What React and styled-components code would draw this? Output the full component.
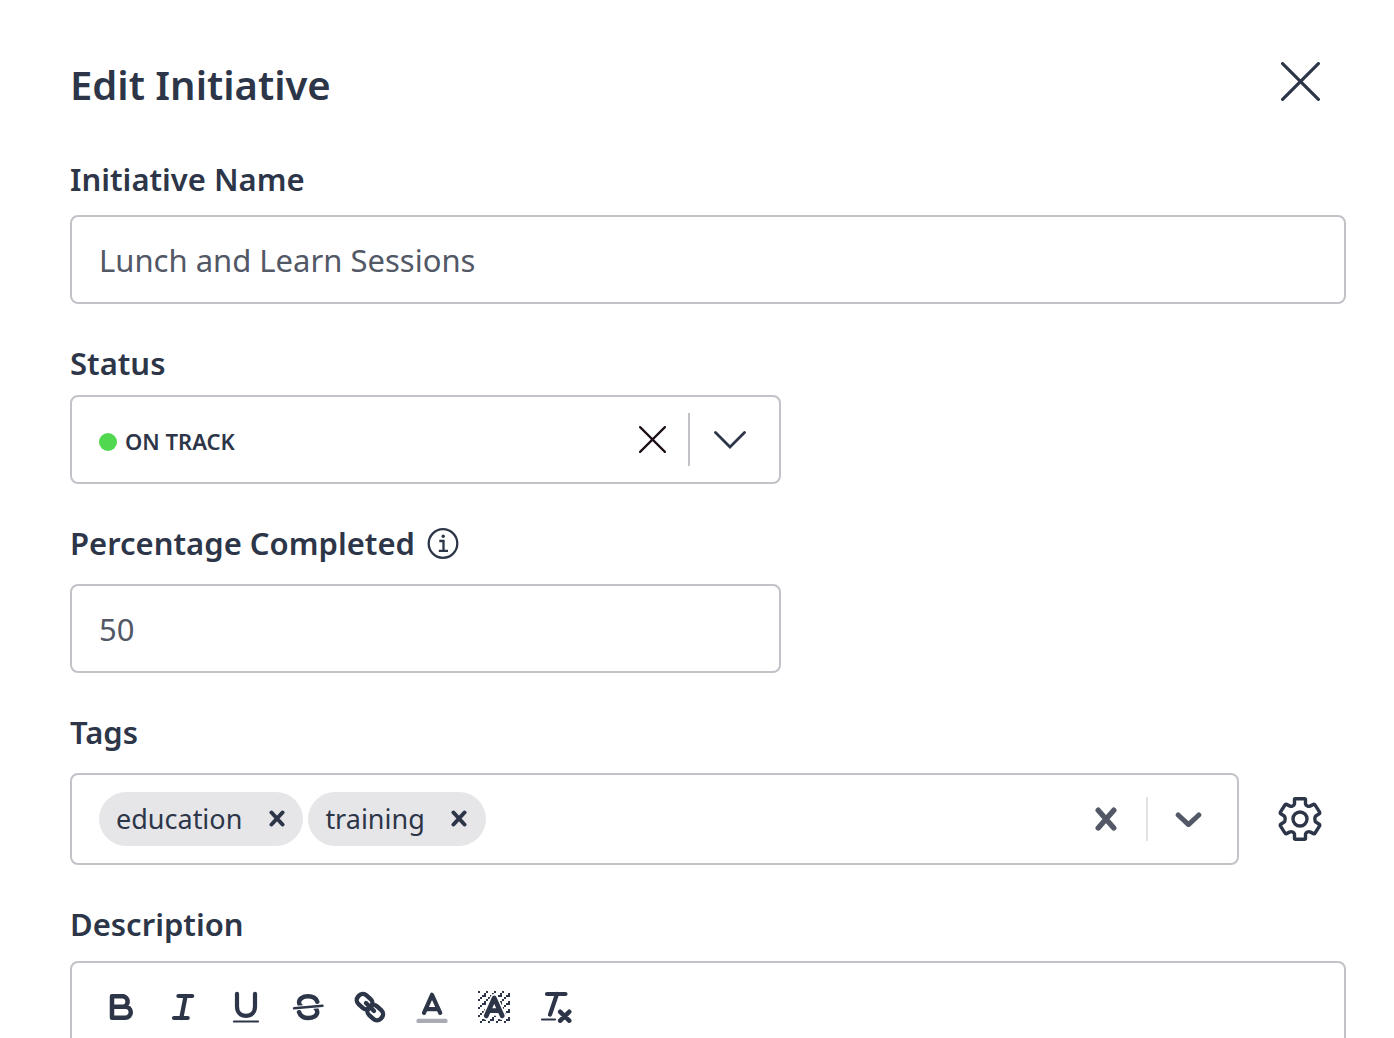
import React, { useState } from "react";
import styled, { createGlobalStyle } from "styled-components";

const ink = "#2d3648";
const soft = "#525866";
const line = "#c2c2c8";

const GlobalStyle = createGlobalStyle`
  *, *::before, *::after { box-sizing: border-box; }
  body {
    margin: 0;
    background: #fff;
    color: ${ink};
    font-family: "Noto Sans", "Open Sans", sans-serif;
  }
  button, input, select, textarea { font: inherit; color: inherit; margin: 0; }
`;

const Dialog = styled.main`
  height: 100vh;
  overflow: hidden;
  padding: 57px 48px 0 70px;
`;

const Header = styled.header`
  display: flex;
  justify-content: space-between;
  align-items: center;
  height: 56px;
  margin-bottom: 44px;
`;

const Title = styled.h1`
  margin: 0;
  font-size: 40px;
  line-height: 56px;
  font-weight: 600;
`;

const IconButton = styled.button`
  display: flex;
  align-items: center;
  justify-content: center;
  flex: none;
  width: ${(p) => p.$width}px;
  height: ${(p) => p.$height || 44}px;
  padding: 0;
  border: 0;
  background: none;
  color: ${(p) => p.$color || ink};
  cursor: pointer;
`;

const CloseButton = styled(IconButton)`
  align-self: flex-start;
  margin-right: 24px;
`;

const Form = styled.form`
  display: flex;
  flex-direction: column;
  gap: 37px;
`;

const Field = styled.div`
  display: flex;
  flex-direction: column;
  gap: ${(p) => p.$gap}px;
`;

const LabelRow = styled.div`
  display: flex;
  align-items: center;
  gap: 12px;
`;

const Label = styled.label`
  font-size: 31px;
  line-height: 44px;
  font-weight: 600;
`;

const TextInput = styled.input`
  width: 100%;
  max-width: ${(p) => (p.$short ? "711px" : "none")};
  height: 89px;
  padding: 0 27px;
  border: 2px solid ${line};
  border-radius: 8px;
  background: #fff;
  color: ${soft};
  font-size: 31px;
  line-height: 44px;
`;

const SelectBox = styled.div`
  display: flex;
  align-items: center;
  max-width: 711px;
  height: 89px;
  padding: 0 8px 0 27px;
  border: 2px solid ${line};
  border-radius: 8px;
`;

const Dot = styled.span`
  flex: none;
  width: 18px;
  height: 18px;
  margin: 4px 8px 0 0;
  border-radius: 50%;
  background: #50d850;
`;

const StatusSelect = styled.select`
  flex: 1;
  min-width: 0;
  appearance: none;
  border: 0;
  padding: 2px 0 0;
  background: none;
  font-size: 22px;
  line-height: 32px;
  font-weight: 600;
`;

const Divider = styled.span`
  width: 2px;
  height: ${(p) => p.$height}px;
  background: ${(p) => p.$color};
`;

const TagsRow = styled.div`
  display: flex;
  align-items: center;
`;

const TagsBox = styled.div`
  display: flex;
  align-items: center;
  flex: 1;
  min-width: 0;
  height: 92px;
  padding: 0 8px 0 27px;
  border: 2px solid ${line};
  border-radius: 8px;
`;

const TagList = styled.ul`
  display: flex;
  gap: 5px;
  margin: 0;
  padding: 0;
  list-style: none;
`;

const Tag = styled.li`
  display: flex;
  align-items: center;
  gap: 8px;
  height: 54px;
  padding-left: 17px;
  border-radius: 27px;
  background: #e6e6e9;
  font-size: 27px;
  line-height: 38px;
`;

const TagInput = styled.input`
  flex: 1;
  min-width: 0;
  border: 0;
  outline: 0;
  background: none;
  font-size: 27px;
`;

const SettingsButton = styled(IconButton)`
  margin: 0 24px 0 39px;
`;

const Editor = styled.div`
  border: 2px solid ${line};
  border-radius: 8px;
`;

const Toolbar = styled.div`
  display: flex;
  gap: 18px;
  padding: 22px 28px;
`;

const EditorArea = styled.textarea`
  display: block;
  width: 100%;
  height: 240px;
  padding: 0 27px;
  border: 0;
  resize: none;
  background: none;
  font-size: 31px;
`;

function Stroke({ w, h = w, sw = 2, children, ...rest }) {
  return (
    <svg
      width={w}
      height={h}
      viewBox={`0 0 ${w} ${h}`}
      fill="none"
      stroke="currentColor"
      strokeWidth={sw}
      strokeLinecap="round"
      strokeLinejoin="round"
      aria-hidden="true"
      {...rest}
    >
      {children}
    </svg>
  );
}

const Cross = ({ size, sw }) => (
  <Stroke w={size} sw={sw}>
    <path d={`M${sw / 2} ${sw / 2}L${size - sw / 2} ${size - sw / 2}M${size - sw / 2} ${sw / 2}L${sw / 2} ${size - sw / 2}`} />
  </Stroke>
);

const InfoIcon = () => (
  <Stroke w={32} sw={2.3}>
    <circle cx="16" cy="16.5" r="14.3" />
    <path d="M12.3 14H16.5V23.5M11.8 23.9H21" strokeLinecap="butt" strokeLinejoin="miter" />
    <circle cx="16.2" cy="9.2" r="1.7" fill="currentColor" stroke="none" />
  </Stroke>
);

const GearIcon = () => (
  <Stroke w={44} sw={3.4}>
    <circle cx="22" cy="22" r="7" />
    <path d="M16.5 2.5Q16.5 1.8 17.5 1.8H26.5Q27.5 1.8 27.5 2.8V6.8Q27.8 8.2 29.3 8.8Q30.8 9.8 32 9.1L35.5 7.4Q36.5 7 37.1 8L41.6 15.2Q42 16.2 41.2 16.8L37.8 19Q36.8 19.7 36.9 22Q36.8 24.3 37.8 25L41.2 27.2Q42 27.8 41.6 28.8L37.1 36Q36.5 37 35.5 36.6L32 34.9Q30.8 34.2 29.3 35.2Q27.8 35.8 27.5 37.2V41.2Q27.5 42.2 26.5 42.2H17.5Q16.5 42.2 16.5 41.2V37.2Q16.2 35.8 14.7 35.2Q13.2 34.2 12 34.9L8.5 36.6Q7.5 37 6.9 36L2.4 28.8Q2 27.8 2.8 27.2L6.2 25Q7.2 24.3 7.1 22Q7.2 19.7 6.2 19L2.8 16.8Q2 16.2 2.4 15.2L6.9 8Q7.5 7 8.5 7.4L12 9.1Q13.2 9.8 14.7 8.8Q16.2 8.2 16.5 6.8Z" />
  </Stroke>
);

const BoldIcon = () => (
  <Stroke w={32} sw={4.5}>
    <path d="M6 5.2H17.3A5.4 5.4 0 0 1 17.3 15.8H6ZM6 15.8H19.3A5.5 5.5 0 0 1 19.3 26.8H6Z" />
  </Stroke>
);

const ItalicIcon = () => (
  <Stroke w={32} sw={4.2}>
    <path d="M10.4 5H24.2M6 27H19.7M17.6 5L13.3 27" />
  </Stroke>
);

const UnderlineIcon = () => (
  <Stroke w={32} sw={4.2}>
    <path d="M7 2.8V15.5C7 21 10.5 24.8 16 24.8S25 21 25 15.5V2.8" />
    <path d="M4 30.5H28" strokeWidth="2.2" />
  </Stroke>
);

const StrikeIcon = () => (
  <Stroke w={32} sw={4.4}>
    <path d="M25.3 10.8C24 7 20.4 5.3 16 5.3C10.5 5.3 7 8 7 11.5C7 13 7.6 14 8.8 15M7 21C8.2 24.7 11.6 27 16 27C21.5 27 25.3 24.5 25.3 21C25.3 19.6 24.8 18.5 23.8 17.7" />
    <path d="M2 17.3L30.5 14.8" stroke="#fff" strokeWidth="4.6" />
    <path d="M2 17.3L30.5 14.8" strokeWidth="2.4" />
  </Stroke>
);

const LinkIcon = () => (
  <Stroke w={32} sw={4.4}>
    <rect x="-8.2" y="-5.9" width="16.4" height="11.8" rx="5.4" transform="translate(10.6 10.6) rotate(42)" />
    <rect x="-8.2" y="-5.9" width="16.4" height="11.8" rx="5.4" transform="translate(21.2 21.6) rotate(42)" />
    <path d="M12 12L20 20" />
  </Stroke>
);

const TextColorIcon = () => (
  <Stroke w={32} sw={4.2}>
    <path d="M8 21.8L16 3.8L24.2 21.8M10.8 18.2H21.4" />
    <path d="M2.6 30H29.4" stroke="#a9acb3" strokeWidth="4.4" />
  </Stroke>
);

const hatch = [];
for (let y = 0; y < 16; y++) {
  for (let x = 0; x < 16; x++) {
    if ((x + y) % 4 === 0 || ((x + y) % 4 === 1 && y % 4 === 2)) hatch.push(`M${x * 2} ${y * 2}h2v2h-2z`);
  }
}
const letterA = "M8.3 24.8L16.2 7L24.2 24.8M11.5 19.6H21";

const HighlightIcon = () => (
  <Stroke w={32} sw={4.8}>
    <path d={hatch.join("")} fill="currentColor" stroke="none" shapeRendering="crispEdges" />
    <path d={letterA} fill="#fff" stroke="#fff" strokeWidth="8" />
    <path d={letterA} />
  </Stroke>
);

const ClearFormatIcon = () => (
  <Stroke w={32} sw={4.2}>
    <path d="M7 3H25.5M17 3L10 23.6" />
    <path d="M2 28.5H15" strokeWidth="2.2" />
    <path d="M20.2 20.8L29.2 29.7M29.2 20.8L20.2 29.7" strokeWidth="4.6" />
  </Stroke>
);

const tools = [
  ["Bold", BoldIcon],
  ["Italic", ItalicIcon],
  ["Underline", UnderlineIcon],
  ["Strikethrough", StrikeIcon],
  ["Link", LinkIcon],
  ["Text colour", TextColorIcon],
  ["Highlight", HighlightIcon],
  ["Clear formatting", ClearFormatIcon],
];

export default function App() {
  const [name, setName] = useState("Lunch and Learn Sessions");
  const [percent, setPercent] = useState("50");
  const [status, setStatus] = useState("on");
  const [tags, setTags] = useState(["education", "training"]);

  return (
    <>
      <GlobalStyle />
      <Dialog>
        <Header>
          <Title>Edit Initiative</Title>
          <CloseButton type="button" $width={43} $height={48} aria-label="Close">
            <Cross size={39} sw={3.2} />
          </CloseButton>
        </Header>
        <Form onSubmit={(e) => e.preventDefault()}>
          <Field $gap={14}>
            <Label htmlFor="name">Initiative Name</Label>
            <TextInput id="name" value={name} onChange={(e) => setName(e.target.value)} />
          </Field>

          <Field $gap={10}>
            <Label htmlFor="status">Status</Label>
            <SelectBox>
              {status && <Dot />}
              <StatusSelect id="status" value={status} onChange={(e) => setStatus(e.target.value)}>
                <option value="" />
                <option value="on">ON TRACK</option>
              </StatusSelect>
              <IconButton type="button" $width={71} $color="#1c0d18" aria-label="Clear status" onClick={() => setStatus("")}>
                <Cross size={27} sw={2.2} />
              </IconButton>
              <Divider $height={53} $color={line} />
              <IconButton type="button" $width={81} aria-label="Open status list">
                <Stroke w={33} h={20} sw={2.8}>
                  <path d="M1.5 2.5L16 17L30.5 2.5" strokeLinejoin="miter" />
                </Stroke>
              </IconButton>
            </SelectBox>
          </Field>

          <Field $gap={19}>
            <LabelRow>
              <Label htmlFor="percent">Percentage Completed</Label>
              <InfoIcon />
            </LabelRow>
            <TextInput id="percent" $short inputMode="numeric" value={percent} onChange={(e) => setPercent(e.target.value)} />
          </Field>

          <Field $gap={19}>
            <Label htmlFor="tags">Tags</Label>
            <TagsRow>
              <TagsBox>
                <TagList>
                  {tags.map((tag) => (
                    <Tag key={tag}>
                      {tag}
                      <IconButton
                        type="button"
                        $width={53}
                        aria-label={`Remove ${tag}`}
                        onClick={() => setTags(tags.filter((t) => t !== tag))}
                      >
                        <Stroke w={18} sw={4}>
                          <path d="M3.5 2.5L14.5 14.5M14.5 2.5L3.5 14.5" />
                        </Stroke>
                      </IconButton>
                    </Tag>
                  ))}
                </TagList>
                <TagInput id="tags" />
                <IconButton type="button" $width={81} $color={soft} aria-label="Clear tags" onClick={() => setTags([])}>
                  <Stroke w={24} sw={5.4}>
                    <path d="M4.2 3.2L19.8 21M19.8 3.2L4.2 21" />
                  </Stroke>
                </IconButton>
                <Divider $height={44} $color="#e3e3e6" />
                <IconButton type="button" $width={81} $color={soft} aria-label="Open tag list">
                  <Stroke w={28} h={16} sw={5}>
                    <path d="M3.2 4L13.5 13.6L23.8 4" />
                  </Stroke>
                </IconButton>
              </TagsBox>
              <SettingsButton type="button" $width={44} aria-label="Tag settings">
                <GearIcon />
              </SettingsButton>
            </TagsRow>
          </Field>

          <Field $gap={15}>
            <Label htmlFor="description">Description</Label>
            <Editor>
              <Toolbar>
                {tools.map(([label, Icon]) => (
                  <IconButton key={label} type="button" $width={44} aria-label={label}>
                    <Icon />
                  </IconButton>
                ))}
              </Toolbar>
              <EditorArea id="description" />
            </Editor>
          </Field>
        </Form>
      </Dialog>
    </>
  );
}
